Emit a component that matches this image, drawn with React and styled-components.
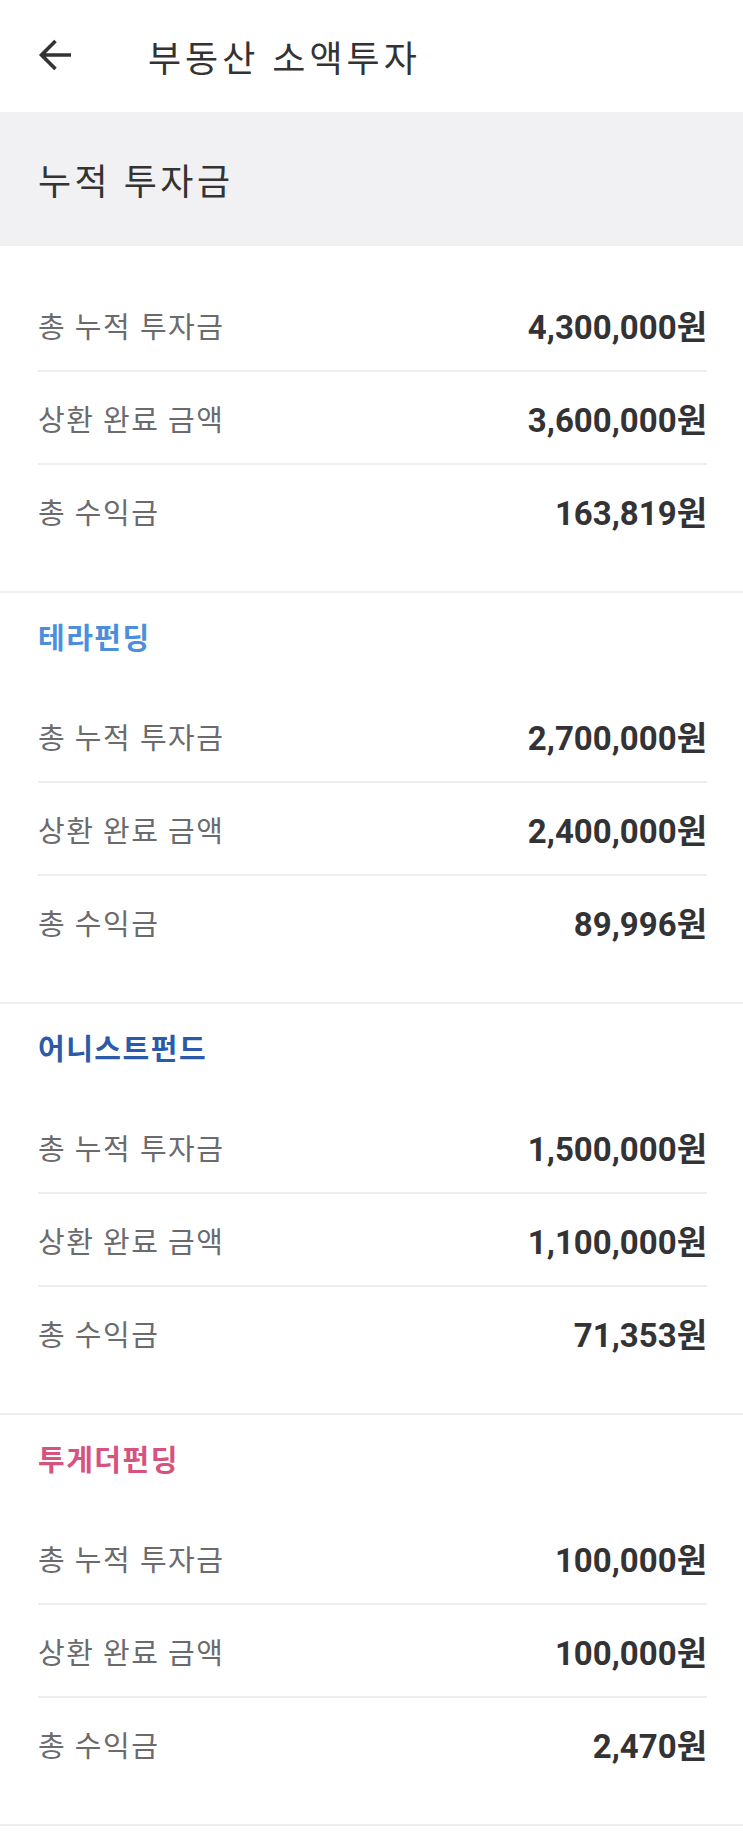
import React from 'react';
import styled, { createGlobalStyle } from 'styled-components';

const GlobalStyle = createGlobalStyle`
  html, body {
    margin: 0;
    padding: 0;
    background: #ffffff;
  }
  body {
    font-family: Roboto, 'Noto Sans CJK KR', 'Noto Sans', sans-serif;
    color: #333333;
  }
`;

const Page = styled.div`
  width: 100%;
  background: #ffffff;
`;

const Header = styled.header`
  height: 112px;
  display: flex;
  align-items: center;
  padding-left: 38px;
  box-sizing: border-box;
`;

const BackButton = styled.button`
  width: 34px;
  height: 34px;
  padding: 0;
  border: 0;
  background: none;
  display: flex;
  align-items: center;
  justify-content: center;
  margin-bottom: 2px;
  color: #333333;
`;

const HeaderTitle = styled.h1`
  margin: 0 0 0 76px;
  font-size: 36px;
  font-weight: 400;
  color: #333333;
  letter-spacing: 4px;
`;

const SummaryHead = styled.div`
  height: 134px;
  background: #f1f1f3;
  display: flex;
  align-items: center;
  padding-left: 38px;
  font-size: 36px;
  font-weight: 400;
  letter-spacing: 3.5px;
  color: #333333;
  box-sizing: border-box;
`;

const Section = styled.section`
  padding: ${({ $brand }) => ($brand ? '0' : '33px')} 36px 35px 38px;
  border-bottom: 2px solid #eeeeee;
`;

const BrandLabel = styled.div`
  height: 97px;
  box-sizing: border-box;
  padding-top: 28px;
  font-size: 29px;
  line-height: 36px;
  font-weight: 700;
  letter-spacing: 1.5px;
  color: ${({ $color }) => $color};
`;

const Row = styled.div`
  height: 91px;
  display: flex;
  align-items: center;
  justify-content: space-between;
  & + & {
    border-top: 2px solid #eeeeee;
  }
`;

const Label = styled.span`
  font-size: 29px;
  letter-spacing: 1.5px;
  color: #6b6b6d;
  font-weight: 400;
`;

const Value = styled.span`
  font-size: 33px;
  font-weight: 700;
  color: #333335;
`;

const ArrowIcon = () => (
  <svg width="34" height="34" viewBox="0 0 34 34" fill="none">
    <path d="M33 17H3M17.5 3L3.5 17L17.5 31" stroke="currentColor" strokeWidth="3.6" />
  </svg>
);

const data = [
  { brand: null, rows: ['4,300,000', '3,600,000', '163,819'] },
  { brand: '테라펀딩', color: '#4b8fdc', rows: ['2,700,000', '2,400,000', '89,996'] },
  { brand: '어니스트펀드', color: '#2a5ba8', rows: ['1,500,000', '1,100,000', '71,353'] },
  { brand: '투게더펀딩', color: '#d6527f', rows: ['100,000', '100,000', '2,470'] },
];

const labels = ['총 누적 투자금', '상환 완료 금액', '총 수익금'];

export default function App() {
  return (
    <Page>
      <GlobalStyle />
      <Header>
        <BackButton aria-label="뒤로">
          <ArrowIcon />
        </BackButton>
        <HeaderTitle>부동산 소액투자</HeaderTitle>
      </Header>
      <SummaryHead>누적 투자금</SummaryHead>
      {data.map((s, i) => (
        <Section key={i} $brand={!!s.brand}>
          {s.brand && <BrandLabel $color={s.color}>{s.brand}</BrandLabel>}
          {s.rows.map((v, j) => (
            <Row key={j}>
              <Label>{labels[j]}</Label>
              <Value>{v}원</Value>
            </Row>
          ))}
        </Section>
      ))}
    </Page>
  );
}
